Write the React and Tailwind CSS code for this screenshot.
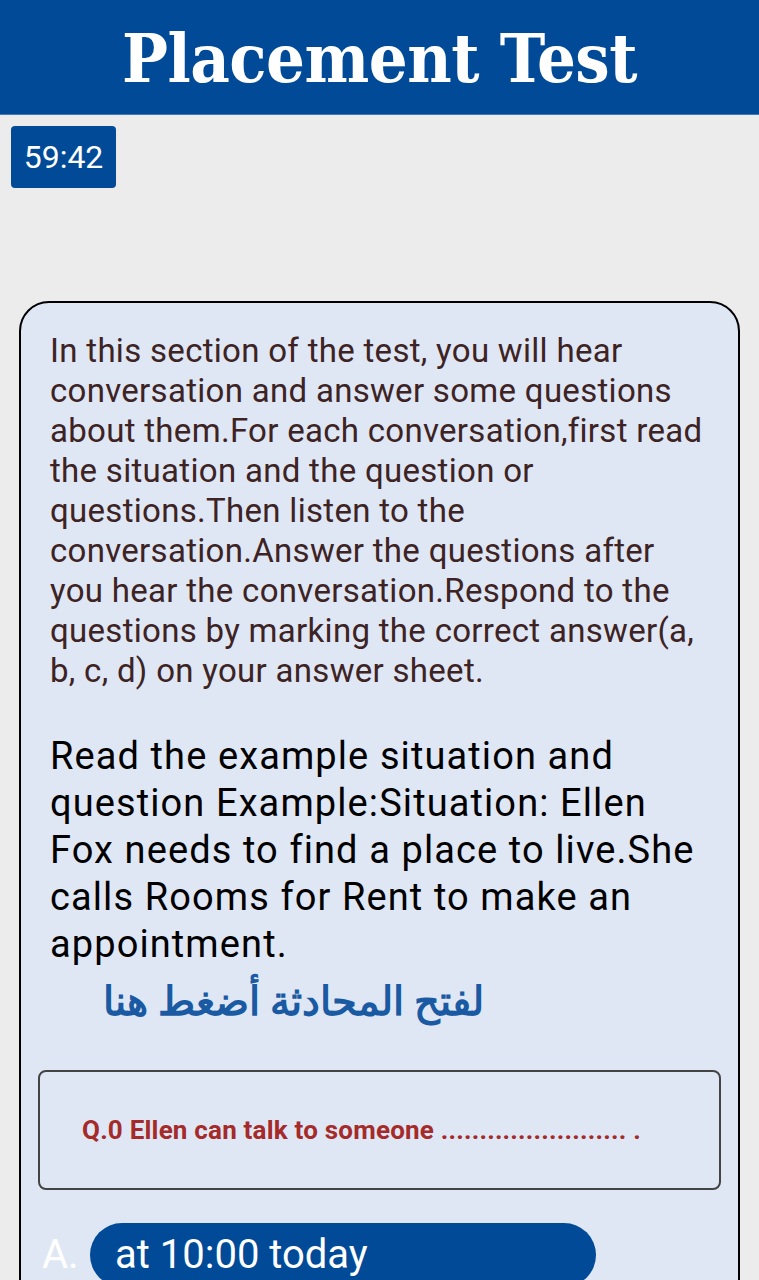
import React from 'react'

const intro =
  'In this section of the test, you will hear conversation and answer some questions about them.For each conversation,first read the situation and the question or questions.Then listen to the conversation.Answer the questions after you hear the conversation.Respond to the questions by marking the correct answer(a, b, c, d) on your answer sheet.'

const example =
  'Read the example situation and question Example:Situation: Ellen Fox needs to find a place to live.She calls Rooms for Rent to make an appointment.'

const App = () => {
  return (
    <div className="min-h-screen bg-[#ececec] font-['Roboto',sans-serif] overflow-hidden">
      {/* Header */}
      <div className="h-[115px] bg-[#004a98] border-b border-[#3f7ac0] flex items-center justify-center">
        <h1 className="text-white font-bold text-[68px] leading-none font-['DejaVu_Serif',serif] [font-stretch:condensed] tracking-[-0.5px] pt-[2px]">
          Placement Test
        </h1>
      </div>

      {/* Timer */}
      <div className="mt-[11px] ml-[11px] w-[105px] h-[62px] rounded-[4px] bg-[#004a98] flex items-center justify-center">
        <span className="text-white text-[32px] leading-none">59:42</span>
      </div>

      {/* Question card */}
      <div className="mt-[113px] mx-[19px] rounded-[30px] border-2 border-black bg-[#dfe7f5] pt-[28px] pb-[40px]">
        <p className="pl-[29px] pr-[30px] text-[33px] tracking-[0.3px] leading-[40px] text-[#3d2323]">{intro}</p>

        <p className="mt-[42px] pl-[29px] pr-[20px] text-[38px] tracking-[1.1px] leading-[47px] text-black">{example}</p>

        <div className="mt-[8px] ml-[29px] w-[434px] text-[#1a5aa3] font-bold text-[40px] leading-[52px]" dir="rtl">
          لفتح المحادثة أضغط هنا
        </div>

        <div className="mt-[42px] mx-[17px] h-[120px] rounded-[8px] border-2 border-[#444] flex items-center pl-[42px]">
          <span className="text-[#a52a2a] font-bold text-[26px] tracking-[0.2px] leading-none">
            Q.0 Ellen can talk to someone ........................ .
          </span>
        </div>

        <div className="mt-[33px] flex items-center pl-[21px]">
          <span className="w-[48px] text-white text-[40px] leading-none">A.</span>
          <div className="w-[506px] h-[64px] rounded-full bg-[#004a98] flex items-center pl-[25px]">
            <span className="text-white text-[40px] leading-none">at 10:00 today</span>
          </div>
        </div>
      </div>
    </div>
  )
}

export default App
